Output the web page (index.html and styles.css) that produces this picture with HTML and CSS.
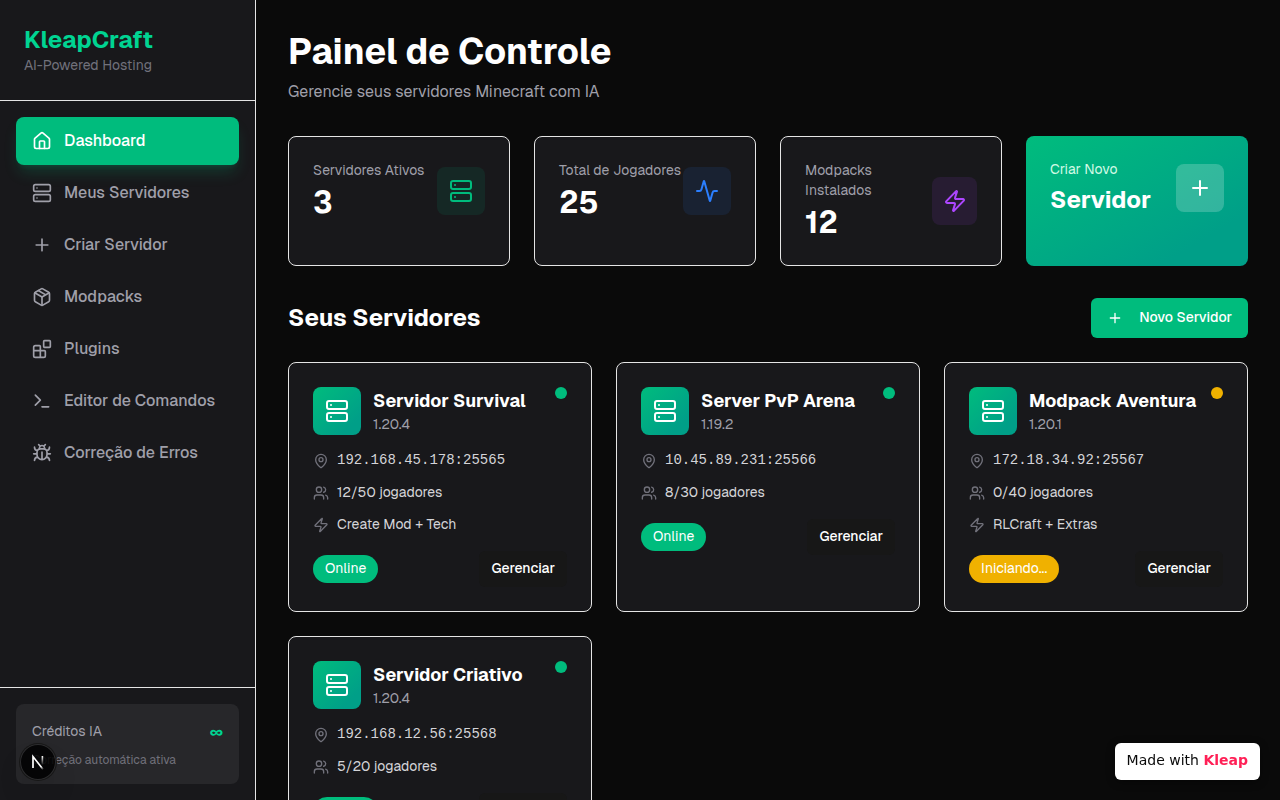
FILE: index.html
```html
<!DOCTYPE html>
<html lang="pt-BR">
<head>
<meta charset="utf-8">
<meta name="viewport" content="width=device-width, initial-scale=1">
<title>KleapCraft - Painel de Controle</title>
<link rel="stylesheet" href="styles.css">
</head>
<body>
<svg class="sprite" aria-hidden="true">
  <symbol id="house" viewBox="0 0 24 24"><path d="M15 21v-8a1 1 0 0 0-1-1h-4a1 1 0 0 0-1 1v8"/><path d="M3 10a2 2 0 0 1 .709-1.528l7-5.999a2 2 0 0 1 2.582 0l7 5.999A2 2 0 0 1 21 10v9a2 2 0 0 1-2 2H5a2 2 0 0 1-2-2z"/></symbol>
  <symbol id="server" viewBox="0 0 24 24"><rect width="20" height="8" x="2" y="2" rx="2" ry="2"/><rect width="20" height="8" x="2" y="14" rx="2" ry="2"/><path d="M6 6h.01M6 18h.01"/></symbol>
  <symbol id="plus" viewBox="0 0 24 24"><path d="M5 12h14M12 5v14"/></symbol>
  <symbol id="package" viewBox="0 0 24 24"><path d="M11 21.73a2 2 0 0 0 2 0l7-4A2 2 0 0 0 21 16V8a2 2 0 0 0-1-1.73l-7-4a2 2 0 0 0-2 0l-7 4A2 2 0 0 0 3 8v8a2 2 0 0 0 1 1.73z"/><path d="M12 22V12"/><path d="M3.29 7 12 12l8.71-5M7.5 4.27l9 5.15"/></symbol>
  <symbol id="blocks" viewBox="0 0 24 24"><rect width="8" height="8" x="14" y="2" rx="1"/><path d="M10 22V9a1 1 0 0 0-1-1H4a2 2 0 0 0-2 2v10a2 2 0 0 0 2 2h10a2 2 0 0 0 2-2v-5a1 1 0 0 0-1-1H2"/></symbol>
  <symbol id="terminal" viewBox="0 0 24 24"><path d="m4 17 6-6-6-6M12 19h8"/></symbol>
  <symbol id="bug" viewBox="0 0 24 24"><path d="m8 2 1.88 1.88M14.12 3.88 16 2M9 7.13v-1a3.003 3.003 0 1 1 6 0v1"/><path d="M12 20c-3.3 0-6-2.7-6-6v-3a4 4 0 0 1 4-4h4a4 4 0 0 1 4 4v3c0 3.3-2.7 6-6 6M12 20v-9M6.53 9C4.6 8.8 3 7.1 3 5M6 13H2M3 21c0-2.1 1.7-3.9 3.8-4M20.97 5c0 2.1-1.6 3.8-3.5 4M22 13h-4M17.2 17c2.1.1 3.8 1.9 3.8 4"/></symbol>
  <symbol id="activity" viewBox="0 0 24 24"><path d="M22 12h-2.48a2 2 0 0 0-1.93 1.46l-2.35 8.36a.25.25 0 0 1-.48 0L9.24 2.18a.25.25 0 0 0-.48 0l-2.35 8.36A2 2 0 0 1 4.49 12H2"/></symbol>
  <symbol id="zap" viewBox="0 0 24 24"><path d="M4 14a1 1 0 0 1-.78-1.63l9.9-10.2a.5.5 0 0 1 .86.46l-1.92 6.02A1 1 0 0 0 13 10h7a1 1 0 0 1 .78 1.63l-9.9 10.2a.5.5 0 0 1-.86-.46l1.92-6.02A1 1 0 0 0 11 14z"/></symbol>
  <symbol id="pin" viewBox="0 0 24 24"><path d="M20 10c0 4.993-5.539 10.193-7.399 11.799a1 1 0 0 1-1.202 0C9.539 20.193 4 14.993 4 10a8 8 0 0 1 16 0"/><circle cx="12" cy="10" r="3"/></symbol>
  <symbol id="users" viewBox="0 0 24 24"><path d="M16 21v-2a4 4 0 0 0-4-4H6a4 4 0 0 0-4 4v2"/><circle cx="9" cy="7" r="4"/><path d="M22 21v-2a4 4 0 0 0-3-3.87M16 3.13a4 4 0 0 1 0 7.75"/></symbol>
</svg>

<div class="shell">
  <aside class="sidebar">
    <header class="brand">
      <div class="brand-name">KleapCraft</div>
      <p class="brand-tag">AI-Powered Hosting</p>
    </header>
    <nav class="nav">
      <a class="nav-link nav-link-active" href="#"><svg class="icon"><use href="#house"/></svg>Dashboard</a>
      <a class="nav-link" href="#"><svg class="icon"><use href="#server"/></svg>Meus Servidores</a>
      <a class="nav-link" href="#"><svg class="icon"><use href="#plus"/></svg>Criar Servidor</a>
      <a class="nav-link" href="#"><svg class="icon"><use href="#package"/></svg>Modpacks</a>
      <a class="nav-link" href="#"><svg class="icon"><use href="#blocks"/></svg>Plugins</a>
      <a class="nav-link" href="#"><svg class="icon"><use href="#terminal"/></svg>Editor de Comandos</a>
      <a class="nav-link" href="#"><svg class="icon"><use href="#bug"/></svg>Correção de Erros</a>
    </nav>
    <footer class="sidebar-footer">
      <div class="credits">
        <div class="credits-row"><span class="credits-label">Créditos IA</span><strong class="credits-value">∞</strong></div>
        <p class="credits-note">Correção automática ativa</p>
      </div>
    </footer>
  </aside>

  <main class="main">
    <h1 class="page-title">Painel de Controle</h1>
    <p class="page-subtitle">Gerencie seus servidores Minecraft com IA</p>

    <section class="stats">
      <article class="stat"><div class="stat-body">
        <div><p class="stat-label">Servidores Ativos</p><p class="stat-value">3</p></div>
        <span class="tile tile-green"><svg class="icon-large"><use href="#server"/></svg></span>
      </div></article>
      <article class="stat"><div class="stat-body">
        <div><p class="stat-label">Total de Jogadores</p><p class="stat-value">25</p></div>
        <span class="tile tile-blue"><svg class="icon-large"><use href="#activity"/></svg></span>
      </div></article>
      <article class="stat"><div class="stat-body">
        <div><p class="stat-label">Modpacks Instalados</p><p class="stat-value">12</p></div>
        <span class="tile tile-purple"><svg class="icon-large"><use href="#zap"/></svg></span>
      </div></article>
      <a class="stat stat-create" href="#"><div class="stat-body">
        <div><p class="stat-label">Criar Novo</p><p class="stat-action">Servidor</p></div>
        <span class="tile tile-light"><svg class="icon-large"><use href="#plus"/></svg></span>
      </div></a>
    </section>

    <div class="section-head">
      <h2 class="section-title">Seus Servidores</h2>
      <button class="button-new" type="button"><svg class="icon-small"><use href="#plus"/></svg>Novo Servidor</button>
    </div>

    <section class="servers">
      <article class="server">
        <header class="server-head">
          <span class="tile tile-gradient"><svg class="icon-large"><use href="#server"/></svg></span>
          <div class="server-id"><h3 class="server-name">Servidor Survival</h3><p class="server-version">1.20.4</p></div>
          <span class="dot"></span>
        </header>
        <ul class="facts">
          <li class="fact"><svg class="icon-small"><use href="#pin"/></svg><span class="address">192.168.45.178:25565</span></li>
          <li class="fact"><svg class="icon-small"><use href="#users"/></svg>12/50 jogadores</li>
          <li class="fact"><svg class="icon-small"><use href="#zap"/></svg>Create Mod + Tech</li>
        </ul>
        <footer class="server-foot"><span class="status">Online</span><button class="button-manage" type="button">Gerenciar</button></footer>
      </article>
      <article class="server">
        <header class="server-head">
          <span class="tile tile-gradient"><svg class="icon-large"><use href="#server"/></svg></span>
          <div class="server-id"><h3 class="server-name">Server PvP Arena</h3><p class="server-version">1.19.2</p></div>
          <span class="dot"></span>
        </header>
        <ul class="facts">
          <li class="fact"><svg class="icon-small"><use href="#pin"/></svg><span class="address">10.45.89.231:25566</span></li>
          <li class="fact"><svg class="icon-small"><use href="#users"/></svg>8/30 jogadores</li>
        </ul>
        <footer class="server-foot"><span class="status">Online</span><button class="button-manage" type="button">Gerenciar</button></footer>
      </article>
      <article class="server">
        <header class="server-head">
          <span class="tile tile-gradient"><svg class="icon-large"><use href="#server"/></svg></span>
          <div class="server-id"><h3 class="server-name">Modpack Aventura</h3><p class="server-version">1.20.1</p></div>
          <span class="dot dot-starting"></span>
        </header>
        <ul class="facts">
          <li class="fact"><svg class="icon-small"><use href="#pin"/></svg><span class="address">172.18.34.92:25567</span></li>
          <li class="fact"><svg class="icon-small"><use href="#users"/></svg>0/40 jogadores</li>
          <li class="fact"><svg class="icon-small"><use href="#zap"/></svg>RLCraft + Extras</li>
        </ul>
        <footer class="server-foot"><span class="status status-starting">Iniciando...</span><button class="button-manage" type="button">Gerenciar</button></footer>
      </article>
      <article class="server">
        <header class="server-head">
          <span class="tile tile-gradient"><svg class="icon-large"><use href="#server"/></svg></span>
          <div class="server-id"><h3 class="server-name">Servidor Criativo</h3><p class="server-version">1.20.4</p></div>
          <span class="dot"></span>
        </header>
        <ul class="facts">
          <li class="fact"><svg class="icon-small"><use href="#pin"/></svg><span class="address">192.168.12.56:25568</span></li>
          <li class="fact"><svg class="icon-small"><use href="#users"/></svg>5/20 jogadores</li>
        </ul>
        <footer class="server-foot"><span class="status">Online</span><button class="button-manage" type="button">Gerenciar</button></footer>
      </article>
    </section>
  </main>
</div>

<button class="dev-badge" type="button" aria-label="Next.js">
  <svg class="dev-mark" viewBox="0 0 36 36" fill="none">
    <defs>
      <linearGradient id="fade-diag" x1="18" y1="18" x2="24" y2="25" gradientUnits="userSpaceOnUse"><stop stop-color="#fff"/><stop offset=".6" stop-color="#fff"/><stop offset="1" stop-color="#fff" stop-opacity="0"/></linearGradient>
      <linearGradient id="fade-stem" x1="22" y1="12" x2="22" y2="21" gradientUnits="userSpaceOnUse"><stop stop-color="#fff"/><stop offset="1" stop-color="#fff" stop-opacity="0"/></linearGradient>
    </defs>
    <path d="M13 24V12.6L23.2 25.6" stroke="url(#fade-diag)" stroke-width="1.7"/>
    <path d="M22.4 12v10" stroke="url(#fade-stem)" stroke-width="1.6"/>
  </svg>
</button>
<a class="made-with" href="#">Made with <strong class="made-name">Kleap</strong></a>
</body>
</html>
```
FILE: styles.css
```css
* { box-sizing: border-box; margin: 0; padding: 0; }

:root {
  --leading-sm: 1.428;
  --leading-lg: 1.555;
  --leading-2xl: 1.333;
}

body {
  background: #0a0a0a;
  color: #fff;
  font-family: "Geist", "Inter", sans-serif;
  font-size: 16px;
  line-height: 24px;
}

a { color: inherit; text-decoration: none; }
button { border: 0; font: inherit; color: inherit; cursor: pointer; }
ul { list-style: none; }

svg {
  flex-shrink: 0;
  fill: none;
  stroke: currentColor;
  stroke-width: 2;
  stroke-linecap: round;
  stroke-linejoin: round;
}

.sprite { display: none; }
.icon { width: 20px; height: 20px; }
.icon-small { width: 16px; height: 16px; }
.icon-large { width: 24px; height: 24px; }

.shell { display: flex; height: 100vh; }

.sidebar {
  display: flex;
  flex-direction: column;
  flex: 0 0 256px;
  background: #18181b;
  border-right: 1px solid #e5e5e5;
}

.brand { padding: 24px; border-bottom: 1px solid #e5e5e5; }
.brand-name {
  color: #00d492;
  font-size: 24px;
  font-weight: 700;
  line-height: var(--leading-2xl);
}
.brand-tag { color: #71717b; font-size: 14px; line-height: var(--leading-sm); }

.nav {
  display: flex;
  flex-direction: column;
  flex: 1;
  gap: 4px;
  padding: 16px;
}
.nav-link {
  display: flex;
  align-items: center;
  gap: 12px;
  padding: 12px 16px;
  border-radius: 8px;
  color: #9f9fa9;
  font-weight: 500;
}
.nav-link-active {
  background: #00bc7d;
  color: #fff;
  box-shadow: 0 10px 15px -3px rgb(0 188 125 / 20%), 0 4px 6px -4px rgb(0 188 125 / 20%);
}

.sidebar-footer { padding: 16px; border-top: 1px solid #e5e5e5; }
.credits { padding: 16px; border-radius: 8px; background: #27272a; }
.credits-row {
  display: flex;
  justify-content: space-between;
  align-items: center;
  margin-bottom: 8px;
}
.credits-label { color: #9f9fa9; font-size: 14px; line-height: var(--leading-sm); }
.credits-value { color: #00d492; }
.credits-note { color: #71717b; font-size: 12px; line-height: 16px; }

.main {
  flex: 1;
  min-width: 0;
  padding: 32px;
  overflow-y: auto;
  scrollbar-width: none;
}
.page-title { font-size: 36px; font-weight: 700; line-height: 40px; }
.page-subtitle { margin: 8px 0 32px; color: #9f9fa9; }

.stats {
  display: grid;
  grid-template-columns: repeat(4, minmax(0, 1fr));
  gap: 24px;
  margin-bottom: 32px;
}
.stat {
  padding: 24px;
  border: 1px solid #e5e5e5;
  border-radius: 8px;
  background: #18181b;
}
.stat-body { display: flex; justify-content: space-between; align-items: center; }
.stat-label { color: #9f9fa9; font-size: 14px; line-height: var(--leading-sm); }
.stat-value { margin-top: 4px; font-size: 30px; font-weight: 700; line-height: 36px; }
.stat-create { border: 0; background: linear-gradient(to bottom right, #00bc7d, #009f88 80%); }
.stat-create .stat-label { color: #d0fae5; }
.stat-action {
  margin-top: 4px;
  font-size: 24px;
  font-weight: 700;
  line-height: var(--leading-2xl);
}

.tile {
  display: flex;
  justify-content: center;
  align-items: center;
  width: 48px;
  height: 48px;
  border-radius: 8px;
}
.tile-green { background: rgb(0 188 125 / 10%); color: #00bc7d; }
.tile-blue { background: rgb(43 127 255 / 10%); color: #2b7fff; }
.tile-purple { background: rgb(173 70 255 / 10%); color: #ad46ff; }
.tile-light { background: rgb(255 255 255 / 20%); }
.tile-gradient { background: linear-gradient(to bottom right, #00bc7d, #009f88 80%); }

.section-head {
  display: flex;
  justify-content: space-between;
  align-items: center;
  margin-bottom: 24px;
}
.section-title { font-size: 24px; font-weight: 700; line-height: var(--leading-2xl); }
.button-new {
  display: flex;
  align-items: center;
  gap: 16px;
  padding: 10px 16px;
  border-radius: 6px;
  background: #00bc7d;
  font-size: 14px;
  font-weight: 500;
  line-height: var(--leading-sm);
}

.servers {
  display: grid;
  grid-template-columns: repeat(3, minmax(0, 1fr));
  gap: 24px;
}
.server {
  padding: 24px;
  border: 1px solid #e5e5e5;
  border-radius: 8px;
  background: #18181b;
}
.server-head { display: flex; gap: 12px; margin-bottom: 16px; }
.server-id { flex: 1; min-width: 0; }
.server-name { font-size: 18px; font-weight: 700; line-height: var(--leading-lg); }
.server-version { color: #9f9fa9; font-size: 14px; line-height: var(--leading-sm); }
.dot { width: 12px; height: 12px; border-radius: 50%; background: #00bc7d; }
.dot-starting { background: #f0b100; }

.facts { display: grid; gap: 12px; margin-bottom: 16px; }
.fact {
  display: flex;
  align-items: center;
  gap: 8px;
  color: #d4d4d8;
  font-size: 14px;
  line-height: var(--leading-sm);
}
.address { font-family: "Liberation Mono", monospace; }
.fact svg { color: #71717b; }

.server-foot { display: flex; justify-content: space-between; align-items: center; }
.status {
  padding: 4px 12px;
  border-radius: 14px;
  background: #00bc7d;
  font-size: 14px;
  line-height: var(--leading-sm);
}
.status-starting { background: #f0b100; }
.button-manage {
  padding: 8px 12px;
  border-radius: 6px;
  background: #171717;
  font-size: 14px;
  font-weight: 500;
  line-height: var(--leading-sm);
}

.dev-badge {
  position: fixed;
  bottom: 20px;
  left: 20px;
  width: 36px;
  height: 36px;
  border-radius: 50%;
  background: rgb(0 0 0 / 85%);
  box-shadow: 0 0 0 1px #171717, inset 0 0 0 1px #2d2d2f, 0 16px 32px -8px rgb(0 0 0 / 24%);
}
.dev-mark { display: block; width: 36px; height: 36px; stroke-linecap: butt; stroke-linejoin: miter; }

.made-with {
  position: fixed;
  right: 20px;
  bottom: 20px;
  padding: 8px 12px 11px;
  border-radius: 6px;
  background: #fff;
  color: #0a0a0a;
  font-family: "DejaVu Sans", sans-serif;
  font-size: 14px;
  line-height: 18px;
  box-shadow: 0 2px 8px rgb(0 0 0 / 40%);
}
.made-name { color: #ff2056; }
```
